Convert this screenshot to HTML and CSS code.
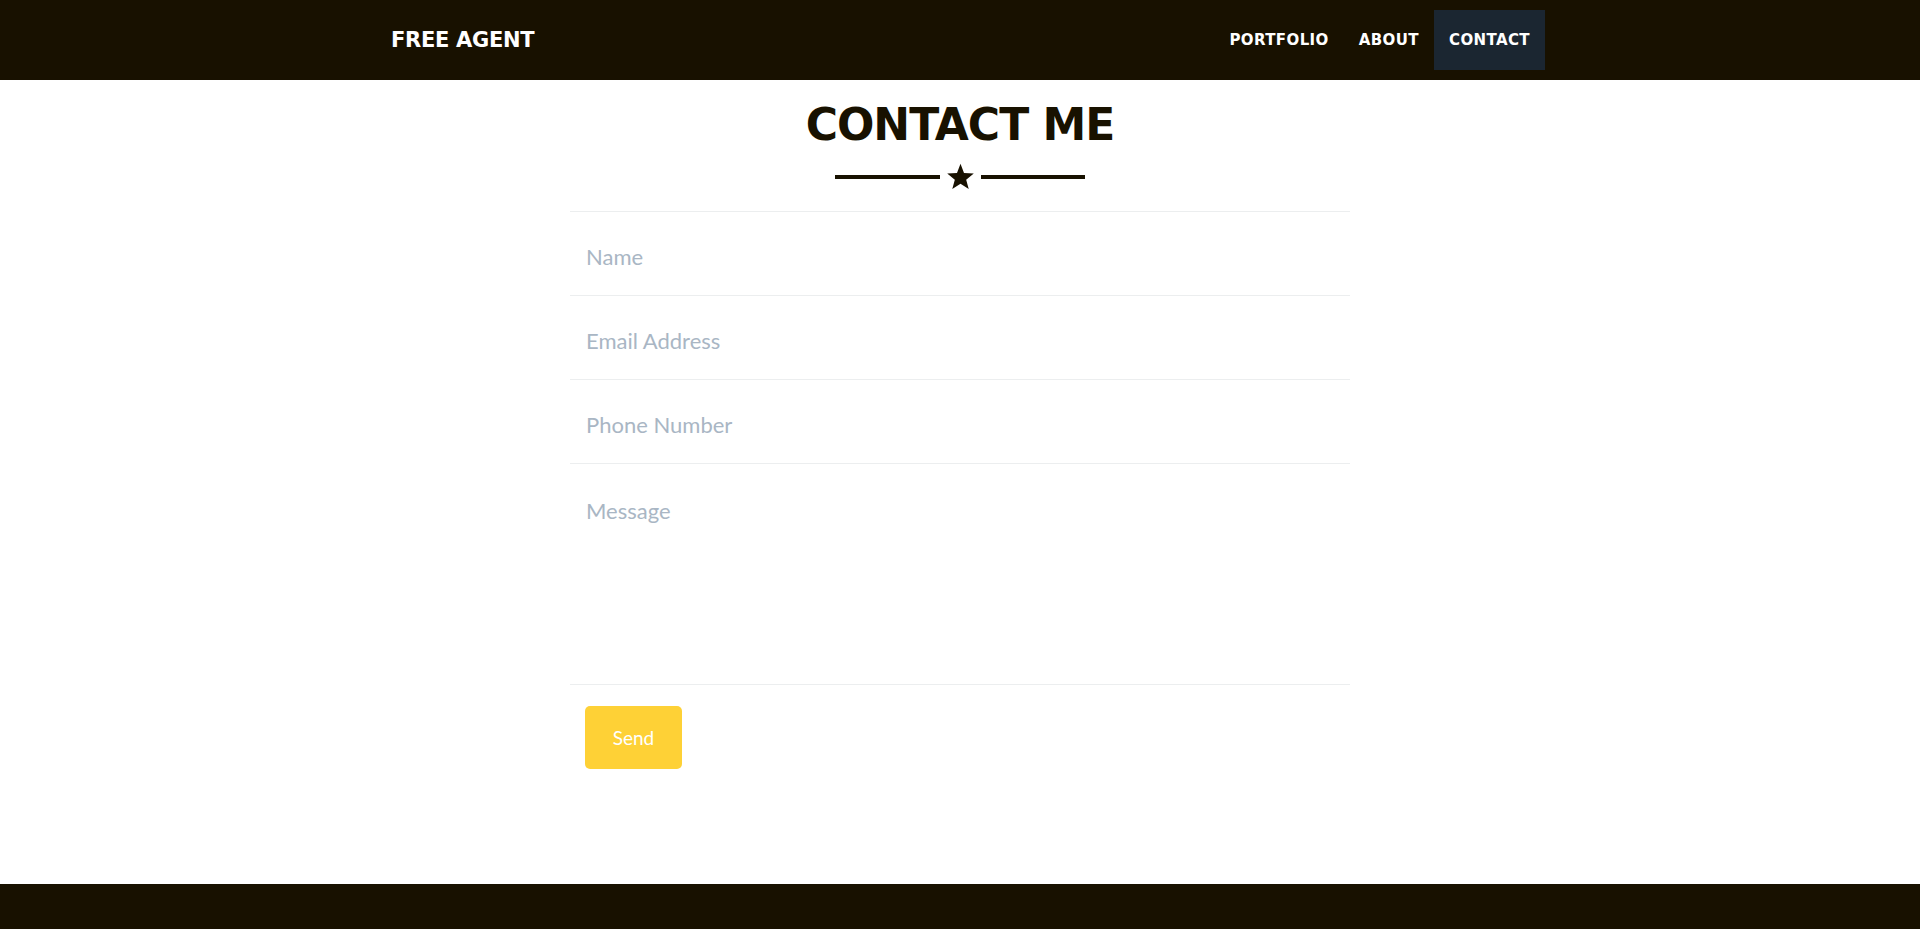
FILE: index.html
```html
<!DOCTYPE html>
<html lang="en">
<head>
<meta charset="utf-8">
<title>Free Agent - Contact</title>
<link rel="stylesheet" href="styles.css">
</head>
<body>
<nav class="navbar">
  <div class="nav-inner">
    <a class="brand" href="#">FREE AGENT</a>
    <ul class="nav-links">
      <li><a href="#">PORTFOLIO</a></li>
      <li><a href="#">ABOUT</a></li>
      <li><a class="active" href="#">CONTACT</a></li>
    </ul>
  </div>
</nav>
<section class="contact">
  <h2 class="title">CONTACT ME</h2>
  <div class="divider">
    <span class="line"></span>
    <svg class="star" width="29" height="28" viewBox="0 0 24 23"><path d="M12 0.6l2.9 7.6 8.1.4-6.3 5.1 2.1 7.8L12 17.1l-6.8 4.4 2.1-7.8L1 8.6l8.1-.4z" fill="#181100"/></svg>
    <span class="line"></span>
  </div>
  <form class="form">
    <div class="field first"><input class="input" type="text" placeholder="Name"></div>
    <div class="field"><input class="input" type="email" placeholder="Email Address"></div>
    <div class="field"><input class="input" type="tel" placeholder="Phone Number"></div>
    <div class="field"><textarea class="textarea" placeholder="Message"></textarea></div>
    <div class="actions"><button class="btn" type="button">Send</button></div>
  </form>
</section>
<footer class="footer"></footer>
</body>
</html>
```
FILE: styles.css
```css
* { box-sizing: border-box; }
html, body { margin: 0; padding: 0; background: #fff; }
body { font-family: "Lato", "Liberation Sans", sans-serif; }

.navbar { background: #181100; height: 80px; }
.nav-inner {
  width: 1170px; margin: 0 auto; height: 80px;
  display: flex; align-items: center; justify-content: space-between;
}
.brand {
  font-family: "DejaVu Sans", sans-serif; font-weight: 700;
  font-size: 21px; color: #fff; text-decoration: none;
  padding-left: 16px; letter-spacing: -0.3px;
}
.nav-links { list-style: none; margin: 0; padding: 0; display: flex; align-self: flex-start; margin-top: 10px; }
.nav-links a {
  display: flex; align-items: center; height: 60px; padding: 0 15px;
  font-family: "DejaVu Sans", sans-serif; font-weight: 700; font-size: 15px;
  color: #fff; text-decoration: none; letter-spacing: 0.4px;
}
.nav-links a.active { background: #1b2631; }

.contact { display: flex; flex-direction: column; align-items: center; padding-top: 23px; }
.title {
  margin: 0; font-family: "DejaVu Sans", sans-serif; font-weight: 700;
  font-size: 44px; line-height: 1; letter-spacing: -1px; color: #181100;
}
.divider { display: flex; align-items: center; gap: 6px; margin-top: 16px; width: 250px; }
.line { flex: 1; height: 4px; background: #181100; }
.star { display: block; }

.form { width: 780px; margin-top: 20px; }
.field { border-bottom: 1px solid #eceeef; }
.field.first { border-top: 1px solid #eceeef; }
.input, .textarea {
  display: block; width: 100%; border: 0; outline: 0; background: transparent;
  font-family: "Lato", sans-serif; font-size: 22px; color: #181100;
  padding: 0 16px;
}
.input { height: 83px; padding-top: 5px; }
.textarea { height: 220px; padding-top: 33px; resize: none; }
.input::placeholder, .textarea::placeholder { color: #a9b6c4; opacity: 1; }

.actions { padding: 21px 15px 0; }
.btn {
  background: #fed136; color: #fff; border: 0; border-radius: 5px;
  font-family: "Lato", sans-serif; font-size: 19px;
  width: 97px; height: 63px; cursor: pointer;
}

.footer { background: #181100; height: 200px; margin-top: 115px; }
```
